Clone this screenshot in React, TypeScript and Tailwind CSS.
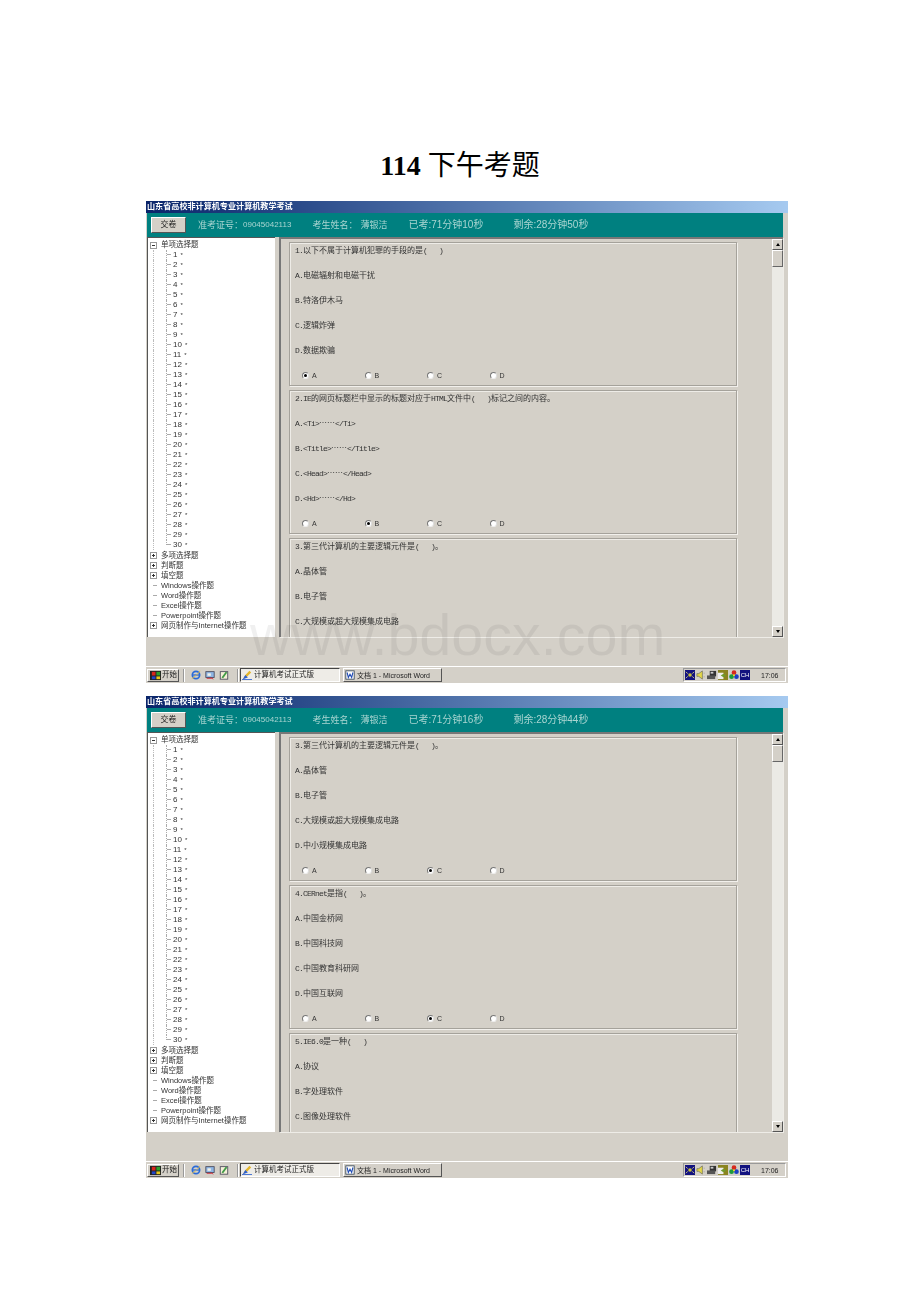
const UI_FONT = "font-['Liberation_Sans','Noto_Sans_CJK_SC',sans-serif]";

type Question = { title: string; options: string[]; picked?: number };

const Q1: Question = {
  title: "1.以下不属于计算机犯罪的手段的是(   )",
  options: ["A.电磁辐射和电磁干扰", "B.特洛伊木马", "C.逻辑炸弹", "D.数据欺骗"],
  picked: 0,
};
const Q2: Question = {
  title: "2.IE的网页标题栏中显示的标题对应于HTML文件中(   )标记之间的内容。",
  options: ["A.<Ti>……</Ti>", "B.<Title>……</Title>", "C.<Head>……</Head>", "D.<Hd>……</Hd>"],
  picked: 1,
};
const Q3: Question = {
  title: "3.第三代计算机的主要逻辑元件是(   )。",
  options: ["A.晶体管", "B.电子管", "C.大规模或超大规模集成电路", "D.中小规模集成电路"],
};
const Q3b: Question = { ...Q3, picked: 2 };
const Q4: Question = {
  title: "4.CERnet是指(   )。",
  options: ["A.中国金桥网", "B.中国科技网", "C.中国教育科研网", "D.中国互联网"],
  picked: 2,
};
const Q5: Question = {
  title: "5.IE6.0是一种(   )",
  options: ["A.协议", "B.字处理软件", "C.图像处理软件", "D.浏览器"],
};

const nums = Array.from({ length: 30 }, (_, i) => i + 1);

// latin runs are half width in the exam app, cjk runs full width
function MixedText({ text }: { text: string }) {
  const parts = text.split(/([\x20-\x7e]+)/).filter(Boolean);
  return (
    <>
      {parts.map((part, i) =>
        /^[\x20-\x7e]+$/.test(part) ? (
          <span key={i} className="font-['Liberation_Mono',monospace] tracking-[-0.8px]">
            {part}
          </span>
        ) : (
          <span key={i} lang="zh-CN" className="font-['Noto_Sans_CJK_SC',sans-serif]">
            {part}
          </span>
        ),
      )}
    </>
  );
}

function Expander({ open }: { open?: boolean }) {
  return (
    <span className="relative z-10 flex size-[7px] shrink-0 items-center justify-center border border-[#999] bg-white">
      <span className="h-px w-[3px] bg-[#333]" />
      {!open && <span className="absolute h-[3px] w-px bg-[#333]" />}
    </span>
  );
}

function ChildRow({ n, last }: { n: number; last: boolean }) {
  return (
    <div className="flex h-[10.03px] items-stretch pl-[5px]">
      <span className="w-[13px] shrink-0 border-l border-dotted border-[#bbb]" />
      <span className={`w-[5px] shrink-0 ${last ? "h-1/2" : ""} border-l border-dotted border-[#aaa]`}>
        <span className={`block ${last ? "h-full" : "h-1/2"} border-b border-[#aaa]`} />
      </span>
      <span className="ml-[2px] flex items-center text-[8px] leading-none text-[#333]">
        {n}
        <span className="ml-[3px] text-[6px]">*</span>
      </span>
    </div>
  );
}

function RootRow({ label, expand, open }: { label: string; expand?: boolean; open?: boolean }) {
  return (
    <div className="flex h-[10.03px] items-center pl-[2px] text-[7.5px] leading-none whitespace-nowrap text-[#333]">
      {expand ? (
        <Expander open={open} />
      ) : (
        <span className="ml-[3px] h-px w-[4px] border-b border-[#aaa]" />
      )}
      <span className="ml-[4px]">{label}</span>
    </div>
  );
}

function Tree() {
  return (
    <div className="w-[128px] shrink-0 overflow-hidden border-t border-l border-[#555] bg-white pt-[2px]">
      <RootRow label="单项选择题" expand open />
      {nums.map((n) => (
        <ChildRow key={n} n={n} last={n === 30} />
      ))}
      <RootRow label="多项选择题" expand />
      <RootRow label="判断题" expand />
      <RootRow label="填空题" expand />
      <RootRow label="Windows操作题" />
      <RootRow label="Word操作题" />
      <RootRow label="Excel操作题" />
      <RootRow label="Powerpoint操作题" />
      <RootRow label="网页制作与Internet操作题" expand />
    </div>
  );
}

function Radio({ label, on }: { label: string; on: boolean }) {
  return (
    <span className="flex w-[62.5px] items-center text-[7px] leading-none text-[#333]">
      <span className="flex size-[7px] items-center justify-center rounded-full border border-t-[#777] border-r-[#ddd] border-b-[#eee] border-l-[#777] bg-white">
        {on && <span className="size-[3px] rounded-full bg-black" />}
      </span>
      <span className="ml-[3px]">{label}</span>
    </span>
  );
}

function QuestionBox({ q }: { q: Question }) {
  return (
    <div className="flex h-[144px] w-[448px] shrink-0 flex-col border border-[#a5a29b] pt-[2px] pl-[5px] text-[8px] leading-[10px] text-[#333] shadow-[inset_1px_1px_0_#eeece7,1px_1px_0_#f2f0ec]">
      <p className="h-[25px] whitespace-pre">
        <MixedText text={q.title} />
      </p>
      {q.options.map((o) => (
        <p key={o} className="h-[25px] whitespace-pre">
          <MixedText text={o} />
        </p>
      ))}
      <div className="mt-[2px] flex pl-[7px]">
        {["A", "B", "C", "D"].map((l, i) => (
          <Radio key={l} label={l} on={q.picked === i} />
        ))}
      </div>
    </div>
  );
}

function ScrollButton({ up }: { up?: boolean }) {
  return (
    <div className="flex h-[11px] items-center justify-center border border-t-white border-r-[#555] border-b-[#555] border-l-white bg-[#d4d0c8]">
      <span
        className={`size-0 border-x-[2.5px] border-x-transparent ${up ? "border-b-[3px] border-b-black" : "border-t-[3px] border-t-black"}`}
      />
    </div>
  );
}

function Scrollbar() {
  return (
    <div className="flex w-[11px] shrink-0 flex-col bg-[#ebeae5]">
      <ScrollButton up />
      <div className="h-[17px] border border-t-white border-r-[#666] border-b-[#666] border-l-white bg-[#d4d0c8]" />
      <div className="flex-1" />
      <ScrollButton />
    </div>
  );
}

function StartFlag() {
  return (
    <svg viewBox="0 0 12 12" className="size-[11px] shrink-0">
      <rect x="0" y="1" width="12" height="10" fill="#222" />
      <rect x="2" y="2" width="4" height="4" fill="#d8261c" />
      <rect x="7" y="2" width="4" height="4" fill="#2ba02b" />
      <rect x="2" y="7" width="4" height="3" fill="#2246c8" />
      <rect x="7" y="7" width="4" height="3" fill="#e8c81c" />
    </svg>
  );
}

function IeIcon() {
  return (
    <svg viewBox="0 0 12 12" className="size-[10px] shrink-0">
      <ellipse cx="6" cy="6" rx="4.4" ry="4.4" fill="none" stroke="#2a6bd8" strokeWidth="2" />
      <path d="M2 6h8" stroke="#2a6bd8" strokeWidth="1.6" />
      <path d="M1 10c3-1 7-5 10-9" stroke="#e2b93b" strokeWidth="1" fill="none" />
    </svg>
  );
}

function DesktopIcon() {
  return (
    <svg viewBox="0 0 12 12" className="size-[10px] shrink-0">
      <rect x="1" y="2" width="10" height="7" fill="#8fb6e4" stroke="#445" />
      <rect x="3" y="4" width="4" height="3" fill="#f0f0e8" />
      <path d="M7 9l3 2M2 10h6" stroke="#c23" strokeWidth="1" />
    </svg>
  );
}

function NoteIcon() {
  return (
    <svg viewBox="0 0 12 12" className="size-[10px] shrink-0">
      <rect x="1.5" y="2" width="9" height="9" fill="#f4f0d8" stroke="#445" />
      <path d="M3 9l5-7 2 1-5 7z" fill="#3f9a45" />
    </svg>
  );
}

function ExamTaskIcon() {
  return (
    <svg viewBox="0 0 12 12" className="size-[10px] shrink-0">
      <path d="M1 11l3-5 5-5 2 2-5 5z" fill="#e3b52b" />
      <path d="M0 11h12v1H0z" fill="#2c5fcf" />
      <path d="M1 11l3-5 3 3z" fill="#2c5fcf" />
    </svg>
  );
}

function WordIcon() {
  return (
    <svg viewBox="0 0 12 12" className="size-[10px] shrink-0">
      <rect x="1" y="1" width="10" height="10" fill="#fff" stroke="#345" />
      <path d="M2.5 3l1.5 6 2-4 2 4 1.5-6" fill="none" stroke="#1f4bb5" strokeWidth="1.3" />
    </svg>
  );
}

function TrayIcons() {
  return (
    <div className="flex items-center gap-px">
      <svg viewBox="0 0 11 11" className="size-[10px]">
        <rect width="11" height="11" fill="#12127f" />
        <circle cx="5.5" cy="5.5" r="2" fill="#c9c23a" />
        <path d="M1 2l2 2M10 2 8 4M1 9l2-2M10 9 8 7" stroke="#d8d27a" />
      </svg>
      <svg viewBox="0 0 11 11" className="size-[10px]">
        <path d="M1 4h2l4-3v9L3 7H1z" fill="#e4d84a" stroke="#554" strokeWidth=".6" />
        <path d="M9 3v1M9 7v1" stroke="#999" />
      </svg>
      <svg viewBox="0 0 11 11" className="size-[10px]">
        <rect x="3" y="1" width="7" height="6" fill="#333" />
        <rect x="4" y="2" width="3" height="2" fill="#ccc" />
        <rect x="0" y="6" width="9" height="4" fill="#555" />
      </svg>
      <svg viewBox="0 0 11 11" className="size-[10px]">
        <rect width="11" height="11" fill="#8a8420" />
        <rect x="0" y="3" width="6" height="7" fill="#eee" />
        <path d="M3 6l3-2 3 2-3 2z" fill="#6f9a2c" />
      </svg>
      <svg viewBox="0 0 11 11" className="size-[10px]">
        <circle cx="5.5" cy="3" r="2.6" fill="#d52a1e" />
        <circle cx="2.8" cy="7.4" r="2.6" fill="#1d9a3a" />
        <circle cx="8.2" cy="7.4" r="2.6" fill="#1c3fc4" />
        <circle cx="5.5" cy="5.8" r="1.2" fill="#e9d32c" />
      </svg>
      <span className="flex h-[10px] w-[10px] items-center justify-center bg-[#12127f] text-[6px] leading-none text-white">
        CH
      </span>
    </div>
  );
}

function Taskbar() {
  return (
    <div className="flex h-[17px] shrink-0 items-center border-t border-white bg-[#d4d0c8] pl-[1px] text-[8px] leading-none text-[#222]">
      <div className="flex h-[13px] w-[32px] items-center gap-px border border-t-white border-r-[#555] border-b-[#555] border-l-white pl-[2px] text-[7.5px]">
        <StartFlag />
        <span>开始</span>
      </div>
      <span className="ml-[4px] h-[13px] w-[2px] border-x border-r-white border-l-[#999]" />
      <div className="ml-[6px] flex w-[46px] items-center gap-[4px]">
        <IeIcon />
        <DesktopIcon />
        <NoteIcon />
      </div>
      <span className="h-[13px] w-[2px] border-x border-r-white border-l-[#999]" />
      <div className="ml-[1px] flex h-[14px] w-[100px] items-center gap-[2px] border border-t-[#444] border-r-white border-b-white border-l-[#444] bg-[#eeece7] pl-[1px] text-[7.5px]">
        <ExamTaskIcon />
        <span>计算机考试正式版</span>
      </div>
      <div className="ml-[3px] flex h-[14px] w-[99px] items-center gap-[2px] border border-t-white border-r-[#555] border-b-[#555] border-l-white pl-[1px] text-[7px]">
        <WordIcon />
        <span>文档 1 - Microsoft Word</span>
      </div>
      <div className="mr-[2px] ml-auto flex h-[14px] w-[103px] items-center border border-t-[#999] border-r-white border-b-white border-l-[#999] pl-[1px] text-[7px]">
        <TrayIcons />
        <span className="ml-[11px]">17:06</span>
      </div>
    </div>
  );
}

function ExamWindow({
  elapsed,
  remaining,
  questions,
  watermark,
}: {
  elapsed: string;
  remaining: string;
  questions: Question[];
  watermark?: boolean;
}) {
  return (
    <div className="relative ml-[146px] h-[482px] w-[642px]">
      <div className={`flex h-full flex-col bg-[#d4d0c8] blur-[0.4px] ${UI_FONT}`}>
        <div className="flex h-[12px] shrink-0 items-center bg-gradient-to-r from-[#0a246a] to-[#a6caf0] pl-[1px] text-[8.1px] leading-none font-bold whitespace-nowrap text-white">
          山东省高校非计算机专业计算机教学考试
        </div>
        <div className="mr-[5px] ml-[1px] flex h-[24px] shrink-0 items-center bg-[#008080] whitespace-nowrap text-[#a9d5d1]">
          <button className="ml-[4px] h-[16px] w-[35px] border border-t-white border-r-[#555] border-b-[#555] border-l-white bg-[#d4d0c8] text-[8px] leading-none text-[#222]">
            交卷
          </button>
          <span className="ml-[12px] text-[9px] leading-none">准考证号：</span>
          <span className="text-[8px] leading-none">09045042113</span>
          <span className="ml-[21px] text-[9px] leading-none">考生姓名：</span>
          <span className="ml-[3px] text-[9px] leading-none">薄银洁</span>
          <span className="ml-[21px] w-[105px] text-[10px] leading-none">已考:{elapsed}</span>
          <span className="text-[10px] leading-none">剩余:{remaining}</span>
        </div>
        <div className="mr-[5px] ml-[1px] flex h-[400px] shrink-0">
          <Tree />
          <div className="ml-[4px] flex min-w-0 flex-1 border-t-2 border-l-2 border-t-[#777] border-l-[#777] shadow-[1px_1px_0_#eeece7]">
            <div className="flex min-w-0 flex-1 flex-col gap-[4px] overflow-hidden pt-[3px] pl-[8px]">
              {questions.map((q) => (
                <QuestionBox key={q.title} q={q} />
              ))}
            </div>
            <Scrollbar />
          </div>
        </div>
        <div className="flex-1" />
        <Taskbar />
      </div>
      {watermark && (
        <div className="pointer-events-none absolute top-[399px] left-[104px] font-['Liberation_Sans',sans-serif] text-[57.5px] leading-[70px] whitespace-nowrap text-black/[0.06]">
          www.bdocx.com
        </div>
      )}
    </div>
  );
}

export default function App() {
  return (
    <div className="h-[1302px] w-[920px] bg-white">
      <h1 className="h-[201px] pt-[150px] text-center font-['Liberation_Serif','Noto_Sans_CJK_SC',serif] text-[28px] leading-[32px] font-bold text-black">
        114 <span className="font-normal">下午考题</span>
      </h1>
      <ExamWindow elapsed="71分钟10秒" remaining="28分钟50秒" questions={[Q1, Q2, Q3]} watermark />
      <div className="h-[13px]" />
      <ExamWindow elapsed="71分钟16秒" remaining="28分钟44秒" questions={[Q3b, Q4, Q5]} />
    </div>
  );
}
